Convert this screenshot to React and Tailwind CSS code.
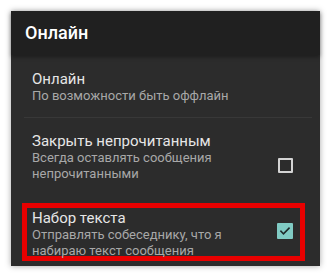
export default function App() {
  return (
    <div className="w-[331px] h-[280px] bg-white pt-[11px] pl-[11px]" style={{ fontFamily: "Roboto, 'Noto Sans', sans-serif" }}>
      <div className="w-[309px] h-[255px] bg-[#2c2c2c] flex flex-col shadow-[0_0_6px_rgba(0,0,0,0.35)]">
        <div className="h-[44px] bg-[#202020] flex items-center pl-[14px] shadow-[0_2px_4px_rgba(0,0,0,0.35)] relative">
          <span className="text-[18px] font-medium text-white leading-none">Онлайн</span>
        </div>
        <div className="pl-[21px] pt-[15px]">
          <div className="text-[15px] leading-[18px] text-[#e6e6e6]">Онлайн</div>
          <div className="text-[13px] leading-[16px] text-[#a8a8a8]">По возможности быть оффлайн</div>
        </div>
        <div className="mt-[13px] ml-[13px] mr-[8px] h-px bg-[#383838]"></div>
        <div className="pl-[21px] pt-[14px] flex items-center pr-[27px]">
          <div className="flex-1">
            <div className="text-[15px] leading-[18px] text-[#e6e6e6]">Закрыть непрочитанным</div>
            <div className="w-[200px] text-[13px] leading-[16px] text-[#a8a8a8]">Всегда оставлять сообщения непрочитанными</div>
          </div>
          <div className="w-[15px] h-[15px] border-2 border-[#d4d4d4] rounded-[1px] mt-[16px]"></div>
        </div>
        <div className="mt-[21px] ml-[11px] w-[283px] h-[58px] border-[5px] border-[#e80000] pl-[5px] pt-[1px] pr-[7px] flex items-start">
          <div className="flex-1">
            <div className="text-[15px] leading-[18px] text-[#e6e6e6]">Набор текста</div>
            <div className="w-[200px] text-[13px] leading-[16px] text-[#a8a8a8]">Отправлять собеседнику, что я набираю текст сообщения</div>
          </div>
          <div className="w-[16px] h-[16px] bg-[#80cbc4] rounded-[1px] mt-[14px] flex items-center justify-center">
            <svg width="12" height="12" viewBox="0 0 24 24" fill="none" stroke="#1e2a2a" strokeWidth="3.2" strokeLinecap="square">
              <path d="M4 12.5l5 5L20 6.5" />
            </svg>
          </div>
        </div>
      </div>
    </div>
  );
}
